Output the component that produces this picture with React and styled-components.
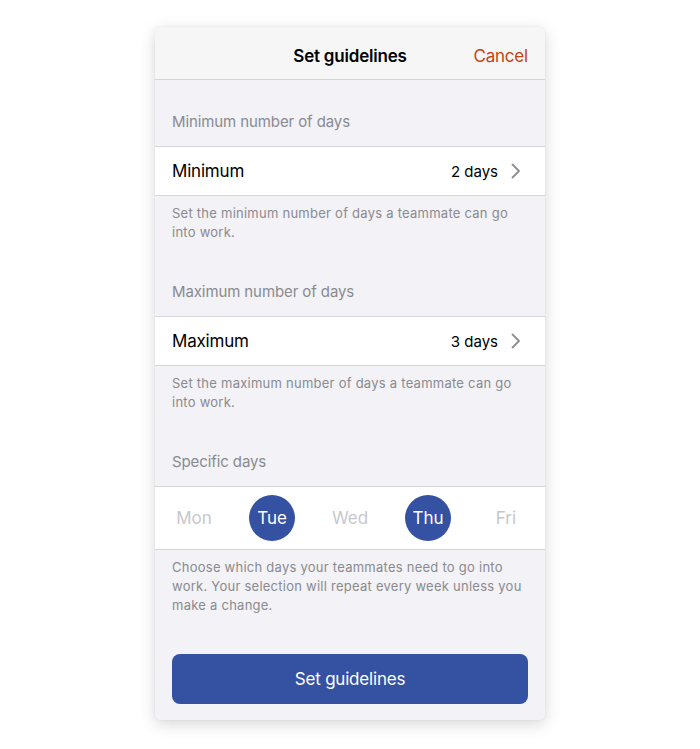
import React from 'react';
import styled, { createGlobalStyle } from 'styled-components';

const GlobalStyle = createGlobalStyle`
  html, body {
    margin: 0;
    padding: 0;
    background: #ffffff;
    font-family: Inter, "Noto Sans", "Liberation Sans", sans-serif;
    -webkit-font-smoothing: antialiased;
  }
  * { box-sizing: border-box; }
`;

const Page = styled.div`
  width: 700px;
  height: 749px;
  display: flex;
  justify-content: center;
  padding-top: 27px;
`;

const Sheet = styled.div`
  width: 390px;
  height: 693px;
  background: #f2f2f7;
  border-radius: 5px;
  overflow: hidden;
  box-shadow: 0 4px 16px rgba(0, 0, 0, 0.16), 0 0 2px rgba(0, 0, 0, 0.08);
  display: flex;
  flex-direction: column;
`;

const Header = styled.div`
  height: 53px;
  background: #f6f6f6;
  border-bottom: 1px solid #d4d4d8;
  display: grid;
  grid-template-columns: 1fr auto 1fr;
  align-items: center;
  padding: 5px 17px 0;
`;

const Title = styled.div`
  grid-column: 2;
  font-size: 17px;
  font-weight: 600;
  color: #000;
  letter-spacing: -0.2px;
`;

const Cancel = styled.div`
  grid-column: 3;
  justify-self: end;
  font-size: 17px;
  color: #c8410f;
  letter-spacing: -0.2px;
`;

const SectionTitle = styled.div`
  padding: 32px 17px 14px;
  font-size: 15px;
  line-height: 20px;
  color: #8a8a8f;
  letter-spacing: -0.1px;
`;

const Row = styled.div`
  height: 50px;
  background: #fff;
  border-top: 1px solid #d6d6da;
  border-bottom: 1px solid #d6d6da;
  display: flex;
  align-items: center;
  padding: 0 24px 0 17px;
`;

const Label = styled.div`
  flex: 1;
  font-size: 17px;
  color: #000;
  letter-spacing: -0.2px;
`;

const Value = styled.div`
  font-size: 15px;
  color: #000;
  margin-right: 13px;
`;

const Note = styled.div`
  padding: 8px 17px 8px;
  font-size: 13px;
  line-height: 19px;
  color: #8a8a8f;
  letter-spacing: 0.25px;
`;

const Days = styled.div`
  height: 64px;
  background: #fff;
  border-top: 1px solid #d6d6da;
  border-bottom: 1px solid #d6d6da;
  display: grid;
  grid-template-columns: repeat(5, 1fr);
  align-items: center;
  justify-items: center;
`;

const Day = styled.div`
  width: 46px;
  height: 46px;
  border-radius: 50%;
  display: flex;
  align-items: center;
  justify-content: center;
  font-size: 17px;
  background: ${p => (p.$on ? '#3551a2' : 'transparent')};
  color: ${p => (p.$on ? '#fff' : '#c7c7cc')};
`;

const Button = styled.button`
  margin: 31px 17px 0;
  height: 50px;
  border: none;
  border-radius: 8px;
  background: #3551a2;
  color: #fff;
  font-family: inherit;
  font-size: 17px;
  letter-spacing: -0.2px;
`;

const Chevron = () => (
  <svg width="10" height="16" viewBox="0 0 10 16">
    <path d="M1.5 1.5 L8 8 L1.5 14.5" fill="none" stroke="#8e8e93" strokeWidth="1.8" strokeLinecap="round" strokeLinejoin="round" />
  </svg>
);

const days = [
  { name: 'Mon', on: false },
  { name: 'Tue', on: true },
  { name: 'Wed', on: false },
  { name: 'Thu', on: true },
  { name: 'Fri', on: false },
];

export default function App() {
  return (
    <>
      <GlobalStyle />
      <Page>
        <Sheet>
          <Header>
            <Title>Set guidelines</Title>
            <Cancel>Cancel</Cancel>
          </Header>

          <SectionTitle>Minimum number of days</SectionTitle>
          <Row>
            <Label>Minimum</Label>
            <Value>2 days</Value>
            <Chevron />
          </Row>
          <Note>Set the minimum number of days a teammate can go into work.</Note>

          <SectionTitle>Maximum number of days</SectionTitle>
          <Row>
            <Label>Maximum</Label>
            <Value>3 days</Value>
            <Chevron />
          </Row>
          <Note>Set the maximum number of days a teammate can go into work.</Note>

          <SectionTitle>Specific days</SectionTitle>
          <Days>
            {days.map(d => (
              <Day key={d.name} $on={d.on}>{d.name}</Day>
            ))}
          </Days>
          <Note>
            Choose which days your teammates need to go into work. Your selection will repeat every week unless you make a change.
          </Note>

          <Button>Set guidelines</Button>
        </Sheet>
      </Page>
    </>
  );
}
